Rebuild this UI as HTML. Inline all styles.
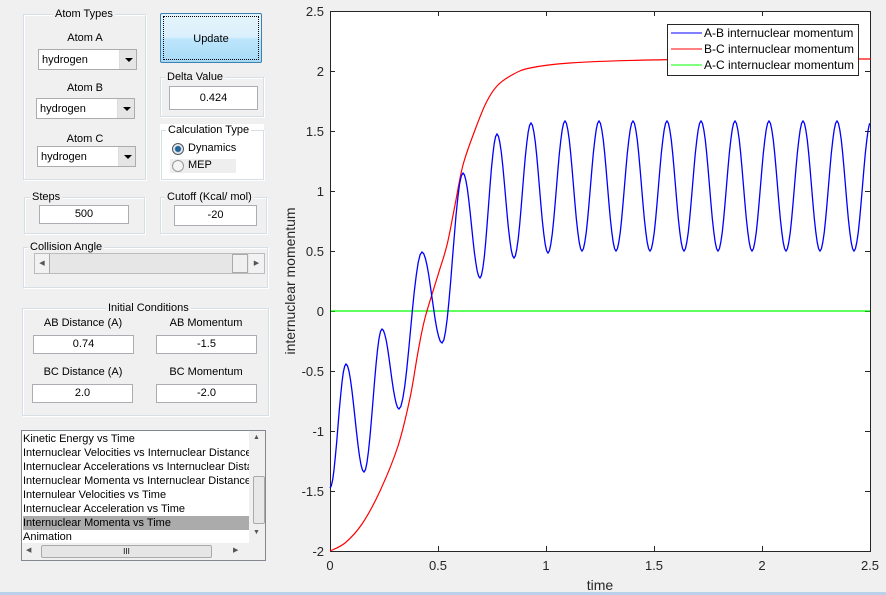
<!DOCTYPE html>
<html><head><meta charset="utf-8"><style>
*{box-sizing:border-box;margin:0;padding:0}
body{width:886px;height:595px;background:#f0f0f0;position:relative;overflow:hidden;font-family:"Liberation Sans",Arial,sans-serif;font-size:11px;color:#000}
.a{position:absolute}
.g{position:absolute;border:1px solid #d5dfe5;box-shadow:inset 1px 1px 0 #fff,1px 1px 0 #fff}
.gt{position:absolute;top:-7px;background:#f0f0f0;padding:0 2px;line-height:12px;white-space:nowrap}
.in{position:absolute;background:#fff;border:1px solid #abadb3;text-align:center;line-height:17px}
.sel{position:absolute;background:#fff;border:1px solid #acacac;line-height:21px;padding-left:3px}
.sel .b{position:absolute;right:0;top:0;bottom:0;width:17px;background:#e5e5e5;border-left:1px solid #ddd}
.sel .b:after{content:"";position:absolute;left:5px;top:8px;border:4px solid transparent;border-top:4px solid #000;border-bottom:0}
.lab{position:absolute;text-align:center;width:100px}
</style></head><body>

<div class="g" style="left:23px;top:14px;width:123px;height:166px"><div class="gt" style="left:29px">Atom Types</div></div>
<div class="lab" style="left:35px;top:32px">Atom A</div>
<div class="sel" style="left:38px;top:49px;width:99px;height:21px">hydrogen<div class="b"></div></div>
<div class="lab" style="left:35px;top:82px">Atom B</div>
<div class="sel" style="left:36px;top:98px;width:99px;height:21px">hydrogen<div class="b"></div></div>
<div class="lab" style="left:35px;top:133px">Atom C</div>
<div class="sel" style="left:37px;top:146px;width:99px;height:21px">hydrogen<div class="b"></div></div>

<div class="a" style="left:160px;top:13px;width:102px;height:50px;border:1px solid #3c7fb1;border-radius:2px;background:linear-gradient(#e5f4fc 0,#daf0fc 48%,#bee6fd 52%,#a7d9f5 100%)">
<div class="a" style="left:2px;top:2px;right:2px;bottom:2px;border:1px dotted #000;text-align:center;line-height:44px">Update</div></div>

<div class="g" style="left:160px;top:77px;width:104px;height:40px"><div class="gt" style="left:4px">Delta Value</div></div>
<div class="in" style="left:169px;top:86px;width:89px;height:24px;line-height:22px">0.424</div>

<div class="a" style="left:160px;top:124px;width:104px;height:57px;background:#fff"></div>
<div class="g" style="left:161px;top:130px;width:103px;height:50px"><div class="gt" style="left:4px;background:#fff">Calculation Type</div></div>
<div class="a" style="left:170px;top:159px;width:66px;height:14px;background:#eee"></div>
<div class="a" style="left:172px;top:143px;width:12px;height:12px;border-radius:50%;border:1px solid #555;background:radial-gradient(circle,#2d6fa8 0,#1d5a8e 2.5px,#dfe9f3 3.5px)"></div>
<div class="a" style="left:188px;top:142px">Dynamics</div>
<div class="a" style="left:172px;top:160px;width:12px;height:12px;border-radius:50%;border:1px solid #999;background:#f4f4f4"></div>
<div class="a" style="left:188px;top:159px">MEP</div>

<div class="g" style="left:24px;top:197px;width:121px;height:37px"><div class="gt" style="left:5px">Steps</div></div>
<div class="in" style="left:39px;top:205px;width:90px;height:19px">500</div>
<div class="g" style="left:160px;top:197px;width:107px;height:37px"><div class="gt" style="left:4px">Cutoff (Kcal/ mol)</div></div>
<div class="in" style="left:174px;top:205px;width:83px;height:21px;line-height:19px">-20</div>

<div class="g" style="left:23px;top:247px;width:245px;height:41px"><div class="gt" style="left:4px">Collision Angle</div></div>
<div class="a" style="left:34px;top:253px;width:231px;height:21px;background:#e6e6e6;border:1px solid #bbb"></div>
<div class="a" style="left:35px;top:254px;width:15px;height:19px;background:#f2f2f2;border-right:1px solid #aaa;font-size:7px;text-align:center;line-height:19px;color:#555">◀</div>
<div class="a" style="left:232px;top:254px;width:16px;height:19px;background:#f0f0f0;border:1px solid #aaa"></div>
<div class="a" style="left:249px;top:254px;width:15px;height:19px;background:#f2f2f2;font-size:7px;text-align:center;line-height:19px;color:#555">▶</div>

<div class="g" style="left:22px;top:308px;width:247px;height:108px"><div class="gt" style="left:83px">Initial Conditions</div></div>
<div class="lab" style="left:33px;top:317px">AB Distance (A)</div>
<div class="lab" style="left:156px;top:317px">AB Momentum</div>
<div class="in" style="left:33px;top:335px;width:101px;height:19px">0.74</div>
<div class="in" style="left:156px;top:335px;width:101px;height:19px">-1.5</div>
<div class="lab" style="left:33px;top:366px">BC Distance (A)</div>
<div class="lab" style="left:156px;top:366px">BC Momentum</div>
<div class="in" style="left:32px;top:384px;width:101px;height:19px">2.0</div>
<div class="in" style="left:156px;top:384px;width:101px;height:19px">-2.0</div>

<div class="a" style="left:21px;top:430px;width:245px;height:131px;background:#fff;border:1px solid #828790;overflow:hidden">
<div class="a" style="left:1px;top:1px;width:227px;line-height:14px;white-space:nowrap;overflow:hidden">
<div>Kinetic Energy vs Time</div><div>Internuclear Velocities vs Internuclear Distance</div><div>Internuclear Accelerations vs Internuclear Distance</div><div>Internuclear Momenta vs Internuclear Distance</div><div>Internulear Velocities vs Time</div><div>Internuclear Acceleration vs Time</div><div style="background:#ababab">Internuclear Momenta vs Time</div><div>Animation</div></div>
<div class="a" style="left:227px;top:0;width:17px;height:112px;background:#f0f0f0"></div>
<div class="a" style="left:231px;top:45px;width:12px;height:48px;background:#e8e8e8;border:1px solid #aaa;border-radius:2px"></div>
<div class="a" style="left:231px;top:3px;font-size:7px;color:#555">▲</div>
<div class="a" style="left:231px;top:98px;font-size:7px;color:#555">▼</div>
<div class="a" style="left:0;top:112px;width:244px;height:18px;background:#f0f0f0"></div>
<div class="a" style="left:19px;top:114px;width:171px;height:13px;background:#e6e6e6;border:1px solid #aaa;border-radius:2px;text-align:center;font-size:8px;line-height:11px">III</div>
<div class="a" style="left:4px;top:115px;font-size:7px;color:#555">◀</div>
<div class="a" style="left:211px;top:115px;font-size:7px;color:#555">▶</div>
</div>

<svg class="a" style="left:0;top:0" width="886" height="595" font-family="Liberation Sans,Arial,sans-serif">
<rect x="330.5" y="11.5" width="540" height="540" fill="#fff" stroke="#262626"/>
<g id="ticks" stroke="#262626"></g>
<g font-size="13" fill="#262626" text-anchor="end">
<text x="324" y="16">2.5</text><text x="324" y="76">2</text><text x="324" y="136">1.5</text><text x="324" y="196">1</text><text x="324" y="256">0.5</text><text x="324" y="316">0</text><text x="324" y="376">-0.5</text><text x="324" y="436">-1</text><text x="324" y="496">-1.5</text><text x="324" y="556">-2</text>
</g>
<g font-size="13" fill="#262626" text-anchor="middle">
<text x="330" y="570">0</text><text x="438" y="570">0.5</text><text x="546" y="570">1</text><text x="654" y="570">1.5</text><text x="762" y="570">2</text><text x="870" y="570">2.5</text>
<text x="600" y="590" font-size="14">time</text>
<text transform="translate(295,281) rotate(-90)" font-size="14">internuclear momentum</text>
</g>
<line x1="331" y1="311" x2="870" y2="311" stroke="#00ff00" stroke-width="1.3"/>
<path id="red" fill="none" stroke="#ff0000" stroke-width="1.2"/>
<path id="blue" fill="none" stroke="#0000ff" stroke-width="1.3"/>
<rect x="667.5" y="24.5" width="191" height="51" fill="#fff" stroke="#262626"/>
<line x1="671" y1="33" x2="702" y2="33" stroke="#0000ff"/>
<line x1="671" y1="49" x2="702" y2="49" stroke="#ff0000"/>
<line x1="671" y1="65" x2="702" y2="65" stroke="#00ff00"/>
<g font-size="12" fill="#000"><text x="704" y="37">A-B internuclear momentum</text><text x="704" y="53">B-C internuclear momentum</text><text x="704" y="69">A-C internuclear momentum</text></g>
</svg>
<div class="a" style="left:0;top:592px;width:886px;height:3px;background:#b9d1ea"></div>
<script>
var t=document.getElementById('ticks'),s='';
for(var i=0;i<6;i++){var x=330.5+108*i;s+='<line x1="'+x+'" y1="551" x2="'+x+'" y2="546"/><line x1="'+x+'" y1="11" x2="'+x+'" y2="16"/>';}
for(var i=0;i<10;i++){var y=11.5+60*i;s+='<line x1="330" y1="'+y+'" x2="335" y2="'+y+'"/><line x1="870" y1="'+y+'" x2="865" y2="'+y+'"/>';}
t.innerHTML=s;
var e=[[330,488],[346,364],[364,472],[382,329],[399,409],[422,252],[442,343],[463,173],[480,278],[497,134],[514,258],[531,123],[548,253]];
var x=565,p=true;while(x<=905){e.push([x,p?121:251]);x+=17;p=!p;}
var d='M330,488';
for(var i=0;i<e.length-1;i++){var a=e[i],b=e[i+1];for(var k=1;k<=12;k++){var f=k/12,xx=a[0]+(b[0]-a[0])*f;if(xx>870)break;var yy=a[1]+(b[1]-a[1])*(1-Math.cos(Math.PI*f))/2;d+='L'+xx.toFixed(1)+','+yy.toFixed(1);}}
document.getElementById('blue').setAttribute('d',d);
var r=[[330,551],[345,543],[362,524],[380,491],[398,446],[410,398],[418,352],[425,318],[438,275],[447,245],[455,205],[463,165],[475,130],[486,103],[497,86],[512,75],[530,68],[570,63],[650,60],[760,59],[871,59]];
var rd='M'+r[0];for(var i=0;i<r.length-1;i++){var p0=r[Math.max(0,i-1)],p1=r[i],p2=r[i+1],p3=r[Math.min(r.length-1,i+2)];
rd+='C'+(p1[0]+(p2[0]-p0[0])/6)+','+(p1[1]+(p2[1]-p0[1])/6)+' '+(p2[0]-(p3[0]-p1[0])/6)+','+(p2[1]-(p3[1]-p1[1])/6)+' '+p2[0]+','+p2[1];}
document.getElementById('red').setAttribute('d',rd);
</script>
</body></html>
